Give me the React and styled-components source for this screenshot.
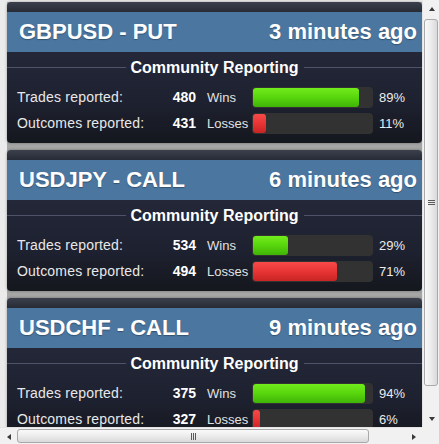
import React from "react";
import styled, { createGlobalStyle, css } from "styled-components";

const GlobalStyle = createGlobalStyle`
  html, body { margin: 0; padding: 0; }
  body {
    background: #e9e9e9;
    font-family: "Liberation Sans", Arial, sans-serif;
    overflow: hidden;
  }
`;

const Frame = styled.div`
  display: grid;
  grid-template-columns: 422px 17px;
  grid-template-rows: 427px 17px;
  width: 439px;
  height: 444px;
`;

const Viewport = styled.div`
  overflow: hidden;
  background: #ebebeb;
`;

const List = styled.div`
  display: flex;
  flex-direction: column;
  gap: 7px;
  margin: 2px 0 0 7px;
  background: #a6a6a6;
`;

const Card = styled.section`
  height: 141px;
  box-sizing: border-box;
  padding: 10px 0 7px;
  border-radius: 4px;
  overflow: hidden;
  background: linear-gradient(
    to bottom,
    #3c404c 0px,
    #272b36 10px,
    #232737 52px,
    #1e2130 100px,
    #15171e 100%
  );
  box-shadow: 0 0 3px rgba(0, 0, 0, 0.35);
  color: #fff;
`;

const Header = styled.header`
  height: 40px;
  display: flex;
  align-items: center;
  justify-content: space-between;
  padding: 0 5px 0 12px;
  background: #4a76a0;
  font-size: 22px;
  font-weight: bold;
  color: #fff;
  text-shadow: 0 1px 1px rgba(0, 0, 0, 0.3);
  white-space: nowrap;
`;

const Heading = styled.h3`
  margin: 0;
  height: 31px;
  display: flex;
  align-items: center;
  gap: 5px;
  font-size: 16px;
  font-weight: bold;
  color: #fff;
  white-space: nowrap;
  &::before,
  &::after {
    content: "";
    flex: 1;
    height: 1px;
    background: #4e5369;
  }
`;

const Rows = styled.div`
  padding-top: 1px;
`;

const Row = styled.div`
  display: grid;
  grid-template-columns: 130px 49px 56px 121px 1fr;
  align-items: center;
  height: 26px;
  padding-left: 10px;
`;

const Label = styled.span`
  font-size: 14px;
  letter-spacing: 0.2px;
  color: #e8e8e8;
  white-space: nowrap;
`;

const Count = styled.span`
  font-size: 14px;
  font-weight: bold;
  color: #fff;
  text-align: right;
`;

const Kind = styled.span`
  font-size: 13px;
  color: #e2e2e2;
  padding-left: 11px;
`;

const Track = styled.div`
  height: 21px;
  box-sizing: border-box;
  padding: 1px;
  border-radius: 4px;
  background: #323232;
`;

const Fill = styled.div`
  height: 100%;
  border-radius: 3px;
  ${(p) =>
    p.$kind === "win"
      ? css`
          background: linear-gradient(to bottom, #72ec1c 0%, #5ad80e 45%, #3fb406 100%);
        `
      : css`
          background: linear-gradient(to bottom, #f84a4a 0%, #e83434 50%, #c92424 100%);
        `}
`;

const Pct = styled.span`
  font-size: 13px;
  color: #ececec;
  padding-left: 6px;
`;

/* scrollbars */
const VBar = styled.div`
  display: flex;
  flex-direction: column;
  background: #f1f1f1;
  border-left: 1px solid #e4e4e4;
  box-sizing: border-box;
`;

const HBar = styled.div`
  display: flex;
  background: #f1f1f1;
  border-top: 1px solid #e4e4e4;
  box-sizing: border-box;
`;

const Corner = styled.div`
  background: #f1f1f1;
`;

const ArrowBtn = styled.div`
  flex: 0 0 17px;
  height: 17px;
  width: 17px;
  display: flex;
  align-items: center;
  justify-content: center;
  box-sizing: border-box;
`;

const Tri = styled.span`
  width: 0;
  height: 0;
  ${(p) =>
    p.$dir === "up" &&
    css`
      border-left: 3.5px solid transparent;
      border-right: 3.5px solid transparent;
      border-bottom: 4px solid #3a3a3a;
    `}
  ${(p) =>
    p.$dir === "down" &&
    css`
      border-left: 3.5px solid transparent;
      border-right: 3.5px solid transparent;
      border-top: 4px solid #3a3a3a;
    `}
  ${(p) =>
    p.$dir === "left" &&
    css`
      border-top: 3.5px solid transparent;
      border-bottom: 3.5px solid transparent;
      border-right: 4px solid #3a3a3a;
    `}
  ${(p) =>
    p.$dir === "right" &&
    css`
      border-top: 3.5px solid transparent;
      border-bottom: 3.5px solid transparent;
      border-left: 4px solid #3a3a3a;
    `}
`;

const VTrack = styled.div`
  flex: 1;
  display: flex;
  flex-direction: column;
  align-items: center;
  padding: 2px 0 24px;
`;

const HTrack = styled.div`
  flex: 1;
  display: flex;
  align-items: center;
  padding: 0 36px 0 0;
`;

const Thumb = styled.div`
  box-sizing: border-box;
  border: 1px solid #a9a9a9;
  border-radius: 3px;
  display: flex;
  align-items: center;
  justify-content: center;
  ${(p) =>
    p.$vertical
      ? css`
          width: 14px;
          flex: 1;
          background: linear-gradient(to right, #fafafa, #ececec 50%, #d9d9d9);
        `
      : css`
          height: 14px;
          flex: 1;
          background: linear-gradient(to bottom, #fafafa, #ececec 50%, #d9d9d9);
        `}
`;

const Grip = styled.span`
  display: block;
  ${(p) =>
    p.$vertical
      ? css`
          width: 7px;
          height: 5px;
          background: repeating-linear-gradient(to bottom, #5a5a5a 0 1px, transparent 1px 2px);
        `
      : css`
          width: 5px;
          height: 7px;
          background: repeating-linear-gradient(to right, #5a5a5a 0 1px, transparent 1px 2px);
        `}
`;

const trades = [
  { pair: "GBPUSD - PUT", ago: "3 minutes ago", reported: 480, outcomes: 431, wins: 89, losses: 11 },
  { pair: "USDJPY - CALL", ago: "6 minutes ago", reported: 534, outcomes: 494, wins: 29, losses: 71 },
  { pair: "USDCHF - CALL", ago: "9 minutes ago", reported: 375, outcomes: 327, wins: 94, losses: 6 },
];

function TradeCard({ t }) {
  return (
    <Card>
      <Header>
        <span>{t.pair}</span>
        <span>{t.ago}</span>
      </Header>
      <Heading>Community Reporting</Heading>
      <Rows>
        <Row>
          <Label>Trades reported:</Label>
          <Count>{t.reported}</Count>
          <Kind>Wins</Kind>
          <Track>
            <Fill $kind="win" style={{ width: `${t.wins}%` }} />
          </Track>
          <Pct>{t.wins}%</Pct>
        </Row>
        <Row>
          <Label>Outcomes reported:</Label>
          <Count>{t.outcomes}</Count>
          <Kind>Losses</Kind>
          <Track>
            <Fill $kind="loss" style={{ width: `${t.losses}%` }} />
          </Track>
          <Pct>{t.losses}%</Pct>
        </Row>
      </Rows>
    </Card>
  );
}

export default function App() {
  return (
    <>
      <GlobalStyle />
      <Frame>
        <Viewport>
          <List>
            {trades.map((t) => (
              <TradeCard key={t.pair} t={t} />
            ))}
          </List>
        </Viewport>
        <VBar>
          <ArrowBtn>
            <Tri $dir="up" />
          </ArrowBtn>
          <VTrack>
            <Thumb $vertical>
              <Grip $vertical />
            </Thumb>
          </VTrack>
          <ArrowBtn>
            <Tri $dir="down" />
          </ArrowBtn>
        </VBar>
        <HBar>
          <ArrowBtn>
            <Tri $dir="left" />
          </ArrowBtn>
          <HTrack>
            <Thumb>
              <Grip />
            </Thumb>
          </HTrack>
          <ArrowBtn>
            <Tri $dir="right" />
          </ArrowBtn>
        </HBar>
        <Corner />
      </Frame>
    </>
  );
}
